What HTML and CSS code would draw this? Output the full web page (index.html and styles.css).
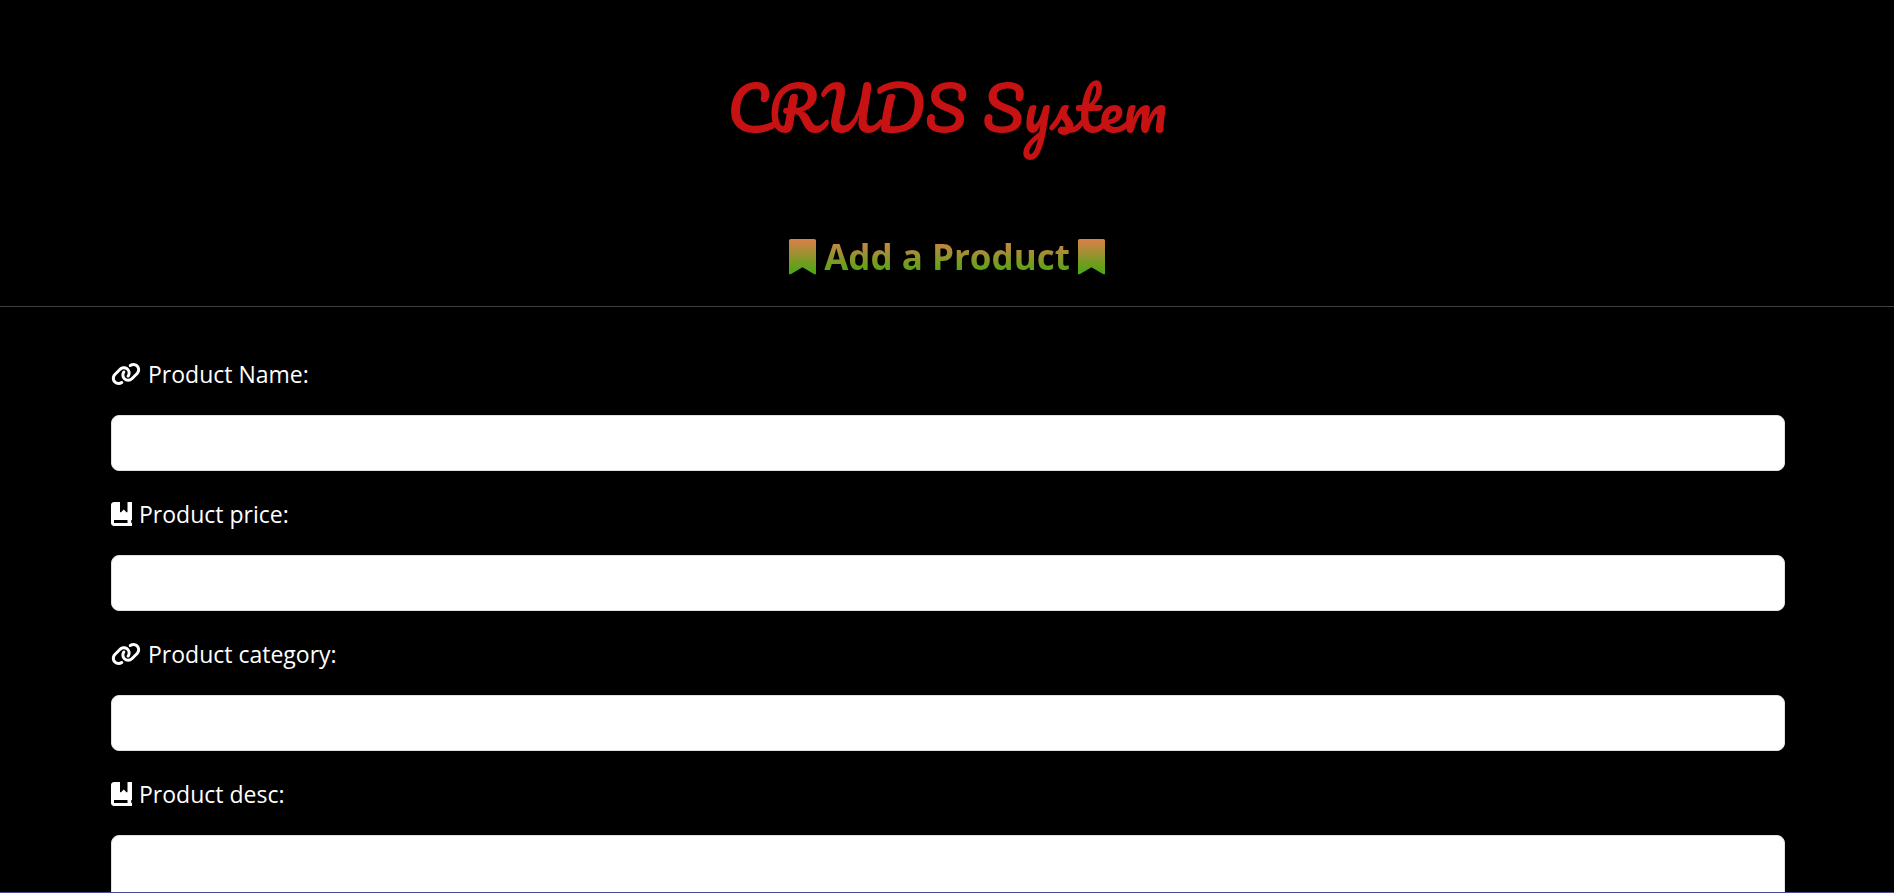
FILE: index.html
```html
<!DOCTYPE html>
<html lang="en">
<head>
<meta charset="utf-8">
<title>CRUDS System</title>
<link rel="stylesheet" href="styles.css">
</head>
<body>
<svg class="defs" aria-hidden="true">
  <defs>
    <linearGradient id="fade" x1="0" y1="0" x2="0" y2="1">
      <stop offset="0" stop-color="#da8049"/>
      <stop offset="1" stop-color="#45a90f"/>
    </linearGradient>
    <symbol id="bookmark" viewBox="0 0 384 512"><path fill="url(#fade)" d="M0 24V500h24L192 400 360 500h24V24c0-13-11-24-24-24H24C11 0 0 11 0 24z"/></symbol>
    <symbol id="link" viewBox="0 0 640 512"><path fill="currentColor" d="M579.8 267.7c56.5-56.5 56.5-148 0-204.5c-50-50-128.8-56.5-186.3-15.4l-1.6 1.1c-14.4 10.3-17.7 30.3-7.4 44.6s30.3 17.7 44.6 7.4l1.6-1.1c32.1-22.9 76-19.3 103.8 8.6c31.5 31.5 31.5 82.5 0 114L422.3 334.8c-31.5 31.500-82.5 31.5-114 0c-27.9-27.9-31.5-71.8-8.6-103.8l1.1-1.6c10.3-14.4 6.9-34.4-7.4-44.6s-34.4-6.9-44.6 7.4l-1.1 1.6C206.5 251.2 213 330 263 380c56.5 56.5 148 56.5 204.5 0L579.8 267.7zM60.2 244.3c-56.5 56.5-56.5 148 0 204.5c50 50 128.8 56.5 186.3 15.4l1.6-1.1c14.4-10.3 17.7-30.3 7.4-44.6s-30.3-17.7-44.6-7.4l-1.6 1.1c-32.1 22.9-76 19.3-103.8-8.6C74 372 74 321 105.5 289.5L217.7 177.2c31.5-31.5 82.5-31.5 114 0c27.9 27.9 31.5 71.8 8.6 103.9l-1.1 1.6c-10.3 14.4-6.9 34.4 7.4 44.6s34.4 6.9 44.6-7.4l1.1-1.6C433.5 260.8 427 182 377 132c-56.5-56.5-148-56.5-204.5 0L60.2 244.3z"/></symbol>
    <symbol id="book" viewBox="0 0 448 512"><path fill="currentColor" d="M0 64C0 29 29 0 64 0h128v208c0 12 14 16 22 8L272 160l58 56c8 8 22 4 22-8V0h96v384h-16v64h16v64H64c-35 0-64-29-64-64V64zm64 320v64h288v-64H64z"/></symbol>
  </defs>
</svg>
<header class="header">
  <h1 class="title">CRUDS System</h1>
  <h2 class="subtitle">
    <svg class="mark" aria-hidden="true"><use href="#bookmark"/></svg>
    <span class="subtitle-text">Add a Product</span>
    <svg class="mark" aria-hidden="true"><use href="#bookmark"/></svg>
  </h2>
</header>
<form class="form">
  <label class="label" for="name"><svg class="icon icon-link" aria-hidden="true"><use href="#link"/></svg>Product Name:</label>
  <input class="field" id="name" type="text">
  <label class="label" for="price"><svg class="icon icon-book" aria-hidden="true"><use href="#book"/></svg>Product price:</label>
  <input class="field" id="price" type="text">
  <label class="label" for="category"><svg class="icon icon-link" aria-hidden="true"><use href="#link"/></svg>Product category:</label>
  <input class="field" id="category" type="text">
  <label class="label" for="desc"><svg class="icon icon-book" aria-hidden="true"><use href="#book"/></svg>Product desc:</label>
  <textarea class="field field-tall" id="desc"></textarea>
</form>
</body>
</html>
```
FILE: styles.css
```css
* {
  box-sizing: border-box;
}

body {
  margin: 0;
  height: 100vh;
  overflow: hidden;
  border-bottom: 1px solid #4b4b9b;
  background: #000;
  color: #fff;
  font-family: "Segoe UI", "Open Sans", "Noto Sans", sans-serif;
}

.defs {
  display: block;
  width: 0;
  height: 0;
}

.header {
  padding: 48px 0 23px;
  border-bottom: 1px solid #404040;
  text-align: center;
}

.title {
  margin: 0 0 63px;
  color: #c61212;
  font-family: Pacifico, cursive;
  font-size: 60px;
  font-weight: 400;
  line-height: 120px;
}

.subtitle {
  display: flex;
  align-items: center;
  justify-content: center;
  gap: 8px;
  margin: 0;
  font-size: 35px;
  font-weight: 700;
  line-height: 52px;
}

.subtitle-text {
  background: linear-gradient(#da8049 8px, #45a90f 44px);
  background-clip: text;
  -webkit-background-clip: text;
  color: transparent;
}

.mark {
  width: 27px;
  height: 36px;
}

.form {
  display: flex;
  flex-direction: column;
  padding: 47px 109px 0 111px;
}

.label {
  display: flex;
  align-items: center;
  gap: 7px;
  margin-bottom: 21px;
  font-size: 23px;
  line-height: 40px;
}

.icon {
  height: 24px;
}

.icon-link {
  width: 30px;
}

.icon-book {
  width: 21px;
}

.field {
  flex: none;
  height: 56px;
  margin: 0 0 23px;
  padding: 8px 16px;
  border: 1px solid #dee2e6;
  border-radius: 8px;
  background: #fff;
  color: #212529;
  font: inherit;
  font-size: 20px;
}

.field-tall {
  height: 112px;
  resize: none;
}
```
